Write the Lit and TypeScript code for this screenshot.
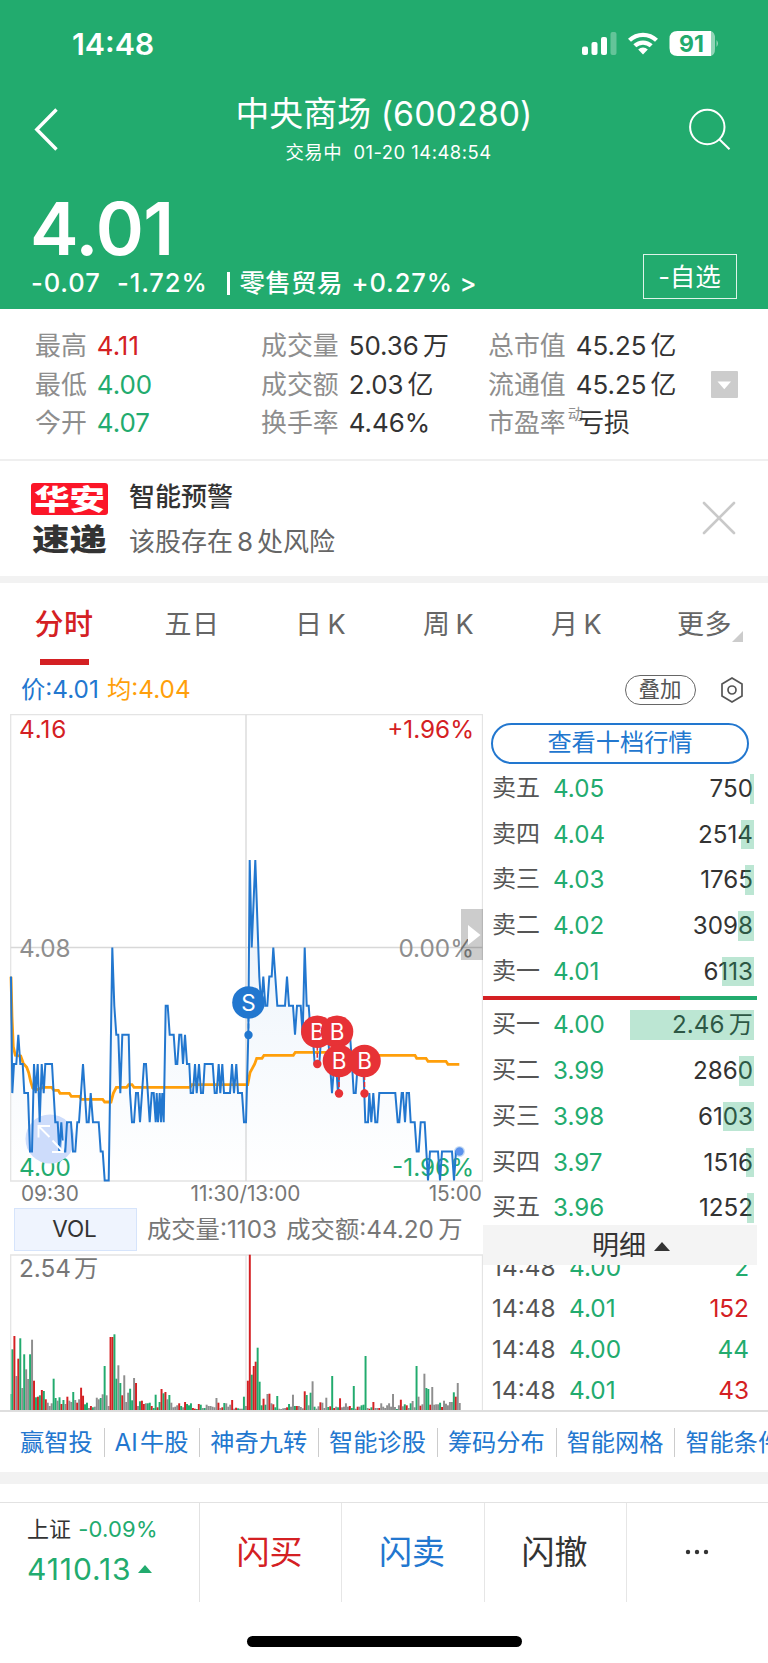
import { LitElement, html, svg, css } from "lit";
import { customElement } from "lit/decorators.js";

const RED = "#d42023";
const GREEN = "#22ab6e";
const GRAY = "#8e8e8e";

// Intraday prices: "x,cents above 4.00", x counted in thirds of a pixel.
const PRICE_AM =
  "33,7 37,3 42,4 49,4 55,5 61,4 68,4 73,3 84,3 90,1 96,1 102,4 107,3 113,4 119,2 125,4 131,3 136,4 156,4 166,2 173,2 178,1 184,2 190,1 196,1 201,2 213,2 219,1 226,1 232,2 237,2 249,4 260,2 266,2 272,3 279,2 296,2 302,1 308,1 314,0 326,0 337,8 343,6 349,5 355,5 361,3 367,5 386,5 390,3 396,2 402,2 408,3 414,3 420,2 432,4 438,4 449,2 455,3 461,3 467,2 470,3 474,2 479,3 483,2 487,3 491,2 497,6 503,6 509,5 521,5 527,4 532,4 538,5 544,5 549,4 555,5 561,4 568,4 572,3 579,3 585,4 590,3 597,4 603,3 609,3 614,4 638,4 644,3 650,3 656,4 661,3 667,4 672,3 690,3 696,4 702,3 709,4 714,3 726,3 732,2 738,2";
const PRICE_PM =
  "745,5 749,11 755,8 766,11 778,7 784,6 790,7 796,6 802,6 808,7 815,7 820,8 832,6 855,6 861,7 867,6 879,6 885,5 891,6 902,6 908,5 914,8 920,6 926,6 932,5 938,5 944,4 958,4 964,5 984,5 990,4 996,3 1003,4 1008,4 1014,3 1020,4 1030,5 1050,5 1056,4 1061,3 1067,3 1073,4 1090,4 1096,2 1104,2 1108,3 1114,2 1120,3 1126,2 1132,2 1138,3 1186,3 1193,2 1198,2 1205,3 1209,3 1215,2 1220,3 1227,3 1232,2 1244,2 1250,1 1256,1 1262,2 1274,2 1284,0 1290,1 1314,1 1320,0 1326,1 1356,1 1362,0 1368,1 1378,1";
const AVERAGE =
  "33,80 36,200 40,290 46,316 62,318 70,340 80,352 86,368 92,395 98,414 108,420 130,412 155,412 162,421 175,421 180,430 208,430 214,439 238,439 244,448 308,448 314,456 333,456 340,430 349,412 380,412 386,404 396,404 402,412 570,412 575,404 743,404 750,368 764,342 770,325 786,325 792,316 880,316 886,307 1100,307 1110,316 1245,316 1250,325 1278,325 1284,334 1338,334 1344,343 1378,343";

// Minute volumes: colour letter plus bar height in thirds of a pixel.
const VOLUME =
  "g48 g182 r222 n102 r154 g215 n66 g167 n122 n93 g167 n211 r88 g38 r40 g44 r60 g57 r32 n22 n12 n20 g94 g36 n28 g38 r18 g30 n18 r40 n28 n24 g54 n30 r22 n32 r67 r43 g17 g22 n6 r12 g8 n10 n37 n32 g36 n47 g132 n44 n12 r219 r219 g227 g94 n134 g81 r44 n104 n24 n52 g64 g29 n96 r81 n12 g26 r28 r18 n20 g20 g22 r12 g6 g46 r8 g24 r63 g50 r54 n32 g45 n22 n8 n10 n14 r20 g12 n8 r24 g18 g14 g20 r6 r4 g3 r18 g16 n6 g6 n16 n12 n12 n10 n8 n36 r22 n6 r8 g21 n20 n10 n16 r30 n4 r7 g5 n4 n4 g40 n12 r88 " +
  "r466 g106 r132 r145 g187 g85 g14 r34 g16 n48 r49 n20 r17 g8 g42 n4 n3 n5 n6 r8 g18 n10 n46 g12 r12 n12 n9 n5 r56 g45 n14 g52 n86 g10 n4 n11 r23 n22 n6 n37 g9 r11 g102 r6 n10 g8 r35 n8 n10 n20 n10 r12 g6 g72 n4 r10 n10 g14 g16 g162 n6 r4 g8 r24 n6 n6 r6 n20 n10 n6 n14 n20 n10 n48 n9 g3 n14 r31 n11 g17 r14 n6 g20 n27 n8 g132 n40 r13 n17 n109 g66 g63 r16 n69 n16 n17 n17 g22 r9 n28 n19 n14 n24 n24 g53 r40 n81 n21";

const pairs = (s: string) => s.split(" ").map((p) => p.split(",").map(Number));
const priceY = (c: number) => 1180.5 - c * 29.13;
const pricePts = pairs(PRICE_AM + " " + PRICE_PM)
  .map(([x, c]) => `${(x / 3).toFixed(1)},${priceY(c).toFixed(1)}`)
  .join(" ");
const avgPts = pairs(AVERAGE)
  .map(([x, y]) => `${(x / 3).toFixed(1)},${(950 + y / 3).toFixed(1)}`)
  .join(" ");

const base = css`
  :host {
    display: block;
    box-sizing: border-box;
    font-family: Inter, "Noto Sans CJK SC", sans-serif;
  }
  * {
    box-sizing: border-box;
  }
  svg {
    display: block;
  }
`;

@customElement("quote-header")
class QuoteHeader extends LitElement {
  static styles = [
    base,
    css`
      :host {
        background: #22ab6e;
        color: #fff;
        height: 309px;
      }
      .status {
        display: flex;
        justify-content: space-between;
        padding: 30px 48px 0 72px;
        height: 89px;
      }
      .clock {
        font-size: 30.3px;
        font-weight: 600;
        line-height: 28px;
      }
      .nav {
        display: grid;
        grid-template-columns: 100px 1fr 100px;
        height: 94px;
      }
      .titles {
        text-align: center;
      }
      .title {
        font-size: 33.8px;
        line-height: 50px;
        font-weight: 400;
        letter-spacing: 0.1px;
      }
      .sub {
        font-size: 18.4px;
        line-height: 26px;
        letter-spacing: 0.5px;
        white-space: pre;
        padding-left: 9px;
      }
      .price {
        font-size: 73px;
        font-weight: 600;
        line-height: 74px;
        height: 87px;
        padding: 9px 0 0 30px;
        letter-spacing: -0.8px;
      }
      .row {
        display: flex;
        justify-content: space-between;
        padding: 0 31px;
        margin-top: -16px;
      }
      .chg {
        display: flex;
        font-size: 25.5px;
        font-weight: 500;
        line-height: 30px;
        letter-spacing: 0.9px;
        padding-top: 14px;
      }
      .c1 {
        width: 86px;
      }
      .c2 {
        width: 110px;
      }
      .c3 {
        width: 2.5px;
        height: 23px;
        background: #fff;
        margin: 4px 10px 0 0;
      }
      .c4 {
        width: 112px;
        letter-spacing: 0.3px;
      }
      .c5 {
        width: 108px;
      }
      .btn {
        width: 94px;
        height: 45px;
        border: 1.5px solid rgba(255, 255, 255, 0.85);
        display: flex;
        align-items: center;
        justify-content: center;
        font-size: 25.5px;
        line-height: 36px;
        padding: 0 1px 0 0;
      }
    `,
  ];
  render() {
    return html`
      <div class="status">
        <div class="clock">14:48</div>
        <svg width="139" height="28" viewBox="581 30 139 28" fill="#fff">
          <rect x="582" y="46.500" width="6" height="8.500" rx="2" />
          <rect x="591.500" y="42" width="6" height="13" rx="2" />
          <rect x="601" y="37" width="6" height="18" rx="2" />
          <rect x="610.500" y="32" width="6" height="23" rx="2" opacity=".3" />
          <g fill="none" stroke="#fff" stroke-width="4.300">
            <path d="M629.500 40.300a19.500 19.500 0 0 1 27 0" />
            <path d="M634.800 45.800a12 12 0 0 1 16.400 0" />
          </g>
          <path d="M643 54.500l-4.800-5a7 7 0 0 1 9.600 0z" />
          <path d="M711 31q4 1.500 4 7v11q0 5.500-4 7z" opacity=".5" />
          <path d="M677.500 31H711v25H677.500q-8 0-8-8v-9q0-8 8-8z" />
          <path d="M716.500 40q3 3.500 0 7z" opacity=".5" />
          <text
            x="691.500" y="51.600" text-anchor="middle" font-size="23"
            font-weight="700" fill=${GREEN}
          >91</text>
        </svg>
      </div>
      <div class="nav">
        <svg width="100" height="94" viewBox="0 89 100 94">
          <path d="M56.500 109.500L36.800 129.500L56.500 149.500" fill="none" stroke="#fff" stroke-width="3.400" />
        </svg>
        <div class="titles">
          <div class="title">中央商场 (600280)</div>
          <div class="sub">交易中  01-20 14:48:54</div>
        </div>
        <svg width="100" height="94" viewBox="668 89 100 94" fill="none" stroke="#fff" stroke-width="2">
          <circle cx="707.300" cy="127" r="17.200" />
          <path d="M719.500 139.500L729.500 149.200" />
        </svg>
      </div>
      <div class="price">4.01</div>
      <div class="row">
        <div class="chg">
          <span class="c1">-0.07</span><span class="c2">-1.72%</span><span class="c3"></span
          ><span class="c4">零售贸易</span><span class="c5">+0.27%</span><span>&gt;</span>
        </div>
        <div class="btn">-自选</div>
      </div>
    `;
  }
}

@customElement("quote-stats")
class QuoteStats extends LitElement {
  static styles = [
    base,
    css`
      :host {
        display: grid;
        grid-template-columns: 226px 227px 223px 1fr;
        height: 152px;
        padding: 18px 0 0 35px;
        border-bottom: 2px solid #efefef;
      }
      .col {
        display: flex;
        flex-direction: column;
      }
      .item {
        display: flex;
        height: 38.7px;
        line-height: 38.7px;
        font-size: 25.9px;
        color: #333;
        white-space: nowrap;
      }
      .label {
        color: #8e8e8e;
        margin-right: 10px;
      }
      .up {
        color: #d42023;
      }
      .down {
        color: #22ab6e;
      }
      .unit {
        margin-left: 4px;
      }
      .sup {
        font-size: 15.5px;
        line-height: 18px;
        color: #8e8e8e;
        margin: 2px -5px 0 -8px;
      }
      .more {
        width: 27px;
        height: 27px;
        background: #ccc;
        margin-top: 44px;
        border-radius: 1px;
      }
    `,
  ];
  render() {
    return html`
      <div class="col">
        <div class="item"><span class="label">最高</span><span class="up">4.11</span></div>
        <div class="item"><span class="label">最低</span><span class="down">4.00</span></div>
        <div class="item"><span class="label">今开</span><span class="down">4.07</span></div>
      </div>
      <div class="col">
        <div class="item"><span class="label">成交量</span>50.36<span class="unit">万</span></div>
        <div class="item"><span class="label">成交额</span>2.03<span class="unit">亿</span></div>
        <div class="item"><span class="label">换手率</span>4.46%</div>
      </div>
      <div class="col">
        <div class="item"><span class="label">总市值</span>45.25<span class="unit">亿</span></div>
        <div class="item"><span class="label">流通值</span>45.25<span class="unit">亿</span></div>
        <div class="item"><span class="label">市盈率</span><span class="sup">动</span>亏损</div>
      </div>
      <div class="more">
        <svg width="27" height="27"><path d="M6.500 10.500h13.500l-6.700 7.800z" fill="#fff" /></svg>
      </div>
    `;
  }
}

@customElement("risk-alert")
class RiskAlert extends LitElement {
  static styles = [
    base,
    css`
      :host {
        display: flex;
        height: 122px;
        padding: 22px 32px 0 31px;
        border-bottom: 7px solid #f2f2f2;
      }
      .logo {
        width: 77px;
        font-weight: 900;
        text-align: center;
      }
      .brand {
        height: 32px;
        background: #fb1628;
        border-radius: 3px;
        color: #fff;
        font-size: 28.5px;
      }
      .brand .wide {
        line-height: 34px;
      }
      .express {
        margin-top: 8px;
        color: #333;
        font-size: 30px;
      }
      .wide {
        display: block;
        transform: scaleX(1.24);
        line-height: 32px;
      }
      .text {
        flex: 1;
        padding-left: 21px;
      }
      .head {
        font-size: 26px;
        font-weight: 500;
        color: #333;
        line-height: 28px;
      }
      .body {
        font-size: 26px;
        color: #666;
        line-height: 30px;
        margin-top: 16px;
      }
      .num {
        margin: 0 4px;
      }
      .close {
        padding-top: 18px;
      }
    `,
  ];
  render() {
    return html`
      <div class="logo">
        <div class="brand"><span class="wide">华安</span></div>
        <div class="express"><span class="wide">速递</span></div>
      </div>
      <div class="text">
        <div class="head">智能预警</div>
        <div class="body">该股存在<span class="num">8</span>处风险</div>
      </div>
      <div class="close">
        <svg width="34" height="34" stroke="#c9c9c9" stroke-width="2.600" stroke-linecap="round">
          <path d="M2 2L32 32M32 2L2 32" />
        </svg>
      </div>
    `;
  }
}

@customElement("period-tabs")
class PeriodTabs extends LitElement {
  static styles = [
    base,
    css`
      :host {
        display: grid;
        grid-template-columns: repeat(6, 128px);
        height: 83px;
        padding-top: 19px;
      }
      .tab {
        display: flex;
        flex-direction: column;
        align-items: center;
        color: #666;
        font-size: 27px;
        line-height: 46px;
        letter-spacing: 0.5px;
      }
      .pair {
        word-spacing: -3px;
        padding-left: 1px;
      }
      .on {
        color: #d42023;
        font-size: 29px;
        font-weight: 500;
      }
      .bar {
        width: 49px;
        height: 6px;
        background: #d42023;
        margin-top: 11px;
      }
      .more {
        display: flex;
        align-items: flex-end;
        margin-right: -12px;
      }
      .more svg {
        margin-bottom: 6px;
      }
    `,
  ];
  render() {
    return html`
      <div class="tab on">分时<div class="bar"></div></div>
      <div class="tab">五日</div>
      <div class="tab pair">日 K</div>
      <div class="tab pair">周 K</div>
      <div class="tab pair">月 K</div>
      <div class="tab"><div class="more">更多<svg width="11" height="11"><path d="M11 0v11H0z" fill="#ccc" /></svg></div></div>
    `;
  }
}

@customElement("chart-legend")
class ChartLegend extends LitElement {
  static styles = [
    base,
    css`
      :host {
        display: flex;
        align-items: center;
        height: 48px;
        padding: 0 25.5px 0 21px;
        font-size: 24.3px;
        line-height: 30px;
      }
      .p {
        color: #2277cf;
        width: 86px;
        padding-bottom: 2px;
      }
      .a {
        color: #ff9f0a;
        flex: 1;
        padding-bottom: 2px;
      }
      .pill {
        width: 71px;
        height: 30px;
        border: 1.5px solid #666;
        border-radius: 15px;
        font-size: 21.5px;
        line-height: 26px;
        text-align: center;
        color: #555;
        margin-right: 25px;
      }
    `,
  ];
  render() {
    return html`
      <div class="p">价:4.01</div>
      <div class="a">均:4.04</div>
      <div class="pill">叠加</div>
      <svg width="22" height="26" fill="none" stroke="#555" stroke-width="1.700">
        <path d="M11 1L21 7V19L11 25L1 19V7z" /><circle cx="11" cy="13" r="4" />
      </svg>
    `;
  }
}

@customElement("minute-chart")
class MinuteChart extends LitElement {
  static styles = [
    base,
    css`
      .axis {
        display: grid;
        grid-template-columns: 1fr 122px 1fr;
        height: 24px;
        padding: 0 1px 0 21px;
        font-size: 20.8px;
        line-height: 20px;
        color: #777;
      }
      .mid {
        margin-left: -3px;
        margin-right: 9px;
        white-space: nowrap;
        display: flex;
        justify-content: center;
      }
      .end {
        text-align: right;
      }
      .vol {
        display: flex;
        height: 46px;
        padding: 0 0 3px 14px;
        color: #777;
        font-size: 24.3px;
        line-height: 43px;
        white-space: nowrap;
        word-spacing: 2.5px;
      }
      .pick {
        width: 123px;
        height: 43px;
        background: #eff4fe;
        border: 1.5px solid #d6e4fb;
        text-align: center;
        color: #333;
        font-size: 22.5px;
        line-height: 40px;
        margin-right: 10px;
        padding-right: 2px;
      }
      text {
        font-size: 24.3px;
      }
      .letter {
        font-size: 22.5px;
      }
    `,
  ];
  marker(x: number, y: number, dotY: number, label: string, color: string) {
    return svg`
      <path d="M${x} ${y}V${dotY}" stroke=${color} stroke-width="1.600" stroke-dasharray="5 2" />
      <circle cx=${x} cy=${dotY} r="4.200" fill=${color} />
      <circle cx=${x} cy=${y} r="16.300" fill=${color} />
      <text class="letter" x=${x} y=${y + 8} fill="#fff" text-anchor="middle">${label}</text>`;
  }
  render() {
    const colors: Record<string, string> = { r: RED, g: GREEN, n: GRAY };
    return html`
      <svg width="483" height="470" viewBox="0 714 483 470">
        <defs>
          <linearGradient id="area" x1="0" y1="860" x2="0" y2="1181" gradientUnits="userSpaceOnUse">
            <stop offset="0" stop-color="#2277cf" stop-opacity=".1" />
            <stop offset="1" stop-color="#2277cf" stop-opacity="0" />
          </linearGradient>
        </defs>
        <g fill="none" stroke="#e4e4e4" stroke-width="1.300">
          <path d="M10.700 714.700H482.500V1181H10.700z" />
          <path d="M10.700 947.500H482.500M246 714.700V1181" stroke="#d8d8d8" />
        </g>
        <g>
          <text x="19" y="738.300" fill=${RED} letter-spacing=".9">4.16</text>
          <text x="474" y="738.300" fill=${RED} text-anchor="end">+1.96%</text>
          <text x="19" y="956.800" fill=${GRAY}>4.08</text>
          <text x="474" y="956.800" fill=${GRAY} text-anchor="end">0.00%</text>
          <text x="19" y="1175.500" fill=${GREEN}>4.00</text>
          <text x="474" y="1175.500" fill=${GREEN} text-anchor="end">-1.96%</text>
        </g>
        <polygon points="11,1181 ${pricePts} 459.500,1181" fill="url(#area)" />
        <circle cx="50" cy="1139" r="24.500" fill="#cddcfb" />
        <polyline points=${avgPts} fill="none" stroke="#ff9f0a" stroke-width="2.800" />
        <polyline points=${pricePts} fill="none" stroke="#2277cf" stroke-width="2" stroke-linejoin="miter" stroke-miterlimit="2" />
        <path d="M49.500 1137L38.500 1126M38.500 1137.500V1126H50M52.500 1140.500L63 1151.500M52 1152H63V1140.500" fill="none" stroke="#fff" stroke-width="1.900" />
        ${this.marker(248.5, 1002.5, 1035, "S", "#2277cf")}
        ${this.marker(317.3, 1031.7, 1064, "B", "#e73236")}
        ${this.marker(337, 1031.7, 1031.7, "B", "#e73236")}
        ${this.marker(339, 1061, 1093.5, "B", "#e73236")}
        ${this.marker(364.5, 1061, 1093.5, "B", "#e73236")}
        <circle cx="459.500" cy="1151.500" r="5.500" fill="#2277cf" opacity=".25" />
        <circle cx="459.500" cy="1151.500" r="4.200" fill="#5b92ec" />
        <rect x="461" y="909" width="22" height="51" fill="#000" opacity=".2" />
        <path d="M468 925L480.500 935L468 945z" fill="#fff" />
      </svg>
      <div class="axis"><span>09:30</span><span class="mid">11:30/13:00</span><span class="end">15:00</span></div>
      <div class="vol"><div class="pick">VOL</div>成交量:1103 成交额:44.20&thinsp;万</div>
      <svg width="483" height="156" viewBox="0 1254 483 156">
        <path d="M10.700 1410V1255H482.500V1410M246 1255V1410" fill="none" stroke="#e4e4e4" stroke-width="1.300" />
        <text x="19" y="1277" fill="#777">2.54<tspan dx="3">万</tspan></text>
        ${VOLUME.split(" ").map((v, i) => {
          const h = Number(v.slice(1)) / 3;
          const x = i ? 9.5 + i * 1.9617 : 10.6;
          return svg`<rect x=${x.toFixed(2)} y=${(1410 - h).toFixed(1)} width=${i ? 1.96 : 0.9} height=${h.toFixed(1)} fill=${colors[v[0]]} />`;
        })}
      </svg>
    `;
  }
}

type Level = [string, string, string, number];
const ASKS: Level[] = [
  ["卖五", "4.05", "750", 4],
  ["卖四", "4.04", "2514", 13],
  ["卖三", "4.03", "1765", 9],
  ["卖二", "4.02", "3098", 16],
  ["卖一", "4.01", "6113", 32],
];
const BIDS: Level[] = [
  ["买一", "4.00", "2.46\u2009万", 124],
  ["买二", "3.99", "2860", 15],
  ["买三", "3.98", "6103", 31],
  ["买四", "3.97", "1516", 8],
  ["买五", "3.96", "1252", 6.5],
];

@customElement("order-book")
class OrderBook extends LitElement {
  static styles = [
    base,
    css`
      :host {
        width: 274px;
        height: 696px;
        padding-top: 9px;
        overflow: hidden;
      }
      .ten {
        margin: 0 8px 2px 8px;
        height: 41px;
        border: 2px solid #2277cf;
        border-radius: 21px;
        color: #2277cf;
        font-size: 24.2px;
        line-height: 36px;
        text-align: center;
      }
      .lvl {
        display: grid;
        grid-template-columns: 61px 100px 1fr;
        height: 45.7px;
        line-height: 45.7px;
        padding: 0 4px 0 9px;
        font-size: 24.2px;
        color: #333;
        position: relative;
      }
      .name {
        color: #555;
        line-height: 44px;
        font-size: 24px;
      }
      .down {
        color: #22ab6e;
      }
      .up {
        color: #d42023;
      }
      .qty {
        text-align: right;
        white-space: nowrap;
      }
      .depth {
        position: absolute;
        right: 3.5px;
        top: 8px;
        height: 29.5px;
        background: rgba(34, 171, 110, 0.3);
      }
      .ratio {
        display: flex;
        height: 4px;
        background: #22ab6e;
        margin: 2px 0 2px;
      }
      .ratio i {
        width: 197px;
        background: #d42023;
      }
      .detail {
        display: flex;
        justify-content: center;
        align-items: center;
        gap: 8px;
        height: 40px;
        background: #f4f4f4;
        color: #333;
        font-size: 27px;
        line-height: 38px;
        padding: 2px 2px 0 24px;
        margin-top: -5.5px;
        position: relative;
      }
      .ticks {
        margin-top: -18px;
      }
      .tick {
        display: grid;
        grid-template-columns: 77px 90px 1fr;
        height: 40.8px;
        line-height: 40.8px;
        font-size: 24.4px;
        padding: 0 8px 0 9px;
        color: #555;
      }
    `,
  ];
  level([n, p, q, w]: Level) {
    return html`<div class="lvl">
      <span class="name">${n}</span><span class="down">${p}</span><span class="qty">${q}</span>
      <div class="depth" style="width:${w}px"></div>
    </div>`;
  }
  render() {
    return html`
      <div class="ten">查看十档行情</div>
      ${ASKS.map((l) => this.level(l))}
      <div class="ratio"><i></i></div>
      ${BIDS.map((l) => this.level(l))}
      <div class="detail">明细<svg width="16" height="9"><path d="M8 0L16 9H0z" fill="#333" /></svg></div>
      <div class="ticks">
        <div class="tick"><span>14:48</span><span class="down">4.00</span><span class="qty down">2</span></div>
        <div class="tick"><span>14:48</span><span class="down">4.01</span><span class="qty up">152</span></div>
        <div class="tick"><span>14:48</span><span class="down">4.00</span><span class="qty down">44</span></div>
        <div class="tick"><span>14:48</span><span class="down">4.01</span><span class="qty up">43</span></div>
      </div>
    `;
  }
}

@customElement("tool-links")
class ToolLinks extends LitElement {
  static styles = [
    base,
    css`
      :host {
        display: flex;
        align-items: center;
        height: 74px;
        border-top: 2px solid #dedede;
        border-bottom: 12px solid #f2f2f2;
        overflow: hidden;
        padding-left: 10px;
      }
      .link {
        color: #2277cf;
        font-size: 24.2px;
        line-height: 29px;
        padding: 0 11px 0 10px;
        border-right: 1px solid #ccc;
        white-space: nowrap;
        flex: none;
      }
    `,
  ];
  render() {
    return ["赢智投", "AI\u200a牛股", "神奇九转", "智能诊股", "筹码分布", "智能网格", "智能条件单"].map(
      (t) => html`<div class="link">${t}</div>`
    );
  }
}

@customElement("trade-bar")
class TradeBar extends LitElement {
  static styles = [
    base,
    css`
      .bar {
        display: grid;
        grid-template-columns: 200px 142px 143px 142px 1fr;
        height: 100px;
        margin-top: 18px;
        border-top: 1.5px solid #e2e2e2;
      }
      .cell {
        display: flex;
        align-items: center;
        justify-content: center;
        border-right: 1.5px solid #e6e6e6;
        font-size: 33px;
        line-height: 40px;
        color: #333;
        padding: 0 2px 1px 0;
      }
      .cell:last-child {
        border: none;
      }
      .index {
        border-right: 1.5px solid #e2e2e2;
        padding: 10px 0 0 27px;
        color: #333;
        font-size: 22px;
        line-height: 32px;
      }
      .down {
        color: #22ab6e;
        margin-left: 1px;
        letter-spacing: 0.2px;
      }
      .last {
        display: flex;
        align-items: center;
        gap: 7px;
        font-size: 30px;
        letter-spacing: 0.9px;
        line-height: 48px;
        color: #22ab6e;
      }
      .buy {
        color: #d42023;
      }
      .sell {
        color: #2277cf;
      }
      .home {
        width: 275px;
        height: 11px;
        border-radius: 6px;
        background: #000;
        margin: 34px auto 0;
      }
    `,
  ];
  render() {
    return html`
      <div class="bar">
        <div class="index">
          上证 <span class="down">-0.09%</span>
          <div class="last">4110.13<svg width="14" height="8"><path d="M7 0L14 8H0z" fill=${GREEN} /></svg></div>
        </div>
        <div class="cell buy">闪买</div>
        <div class="cell sell">闪卖</div>
        <div class="cell">闪撤</div>
        <div class="cell">
          <svg width="24" height="6" fill="#333"><circle cx="3" cy="3" r="2.200" /><circle cx="12" cy="3" r="2.200" /><circle cx="21" cy="3" r="2.200" /></svg>
        </div>
      </div>
      <div class="home"></div>
    `;
  }
}

@customElement("app-root")
class AppRoot extends LitElement {
  static styles = [
    base,
    css`
      :host {
        width: 768px;
        height: 1663px;
        background: #fff;
        overflow: hidden;
      }
      .main {
        display: flex;
        height: 696px;
      }
      minute-chart {
        width: 483px;
        flex: none;
      }
    `,
  ];
  render() {
    return html`
      <quote-header></quote-header>
      <quote-stats></quote-stats>
      <risk-alert></risk-alert>
      <period-tabs></period-tabs>
      <chart-legend></chart-legend>
      <div class="main">
        <minute-chart></minute-chart>
        <order-book></order-book>
      </div>
      <tool-links></tool-links>
      <trade-bar></trade-bar>
    `;
  }
}
